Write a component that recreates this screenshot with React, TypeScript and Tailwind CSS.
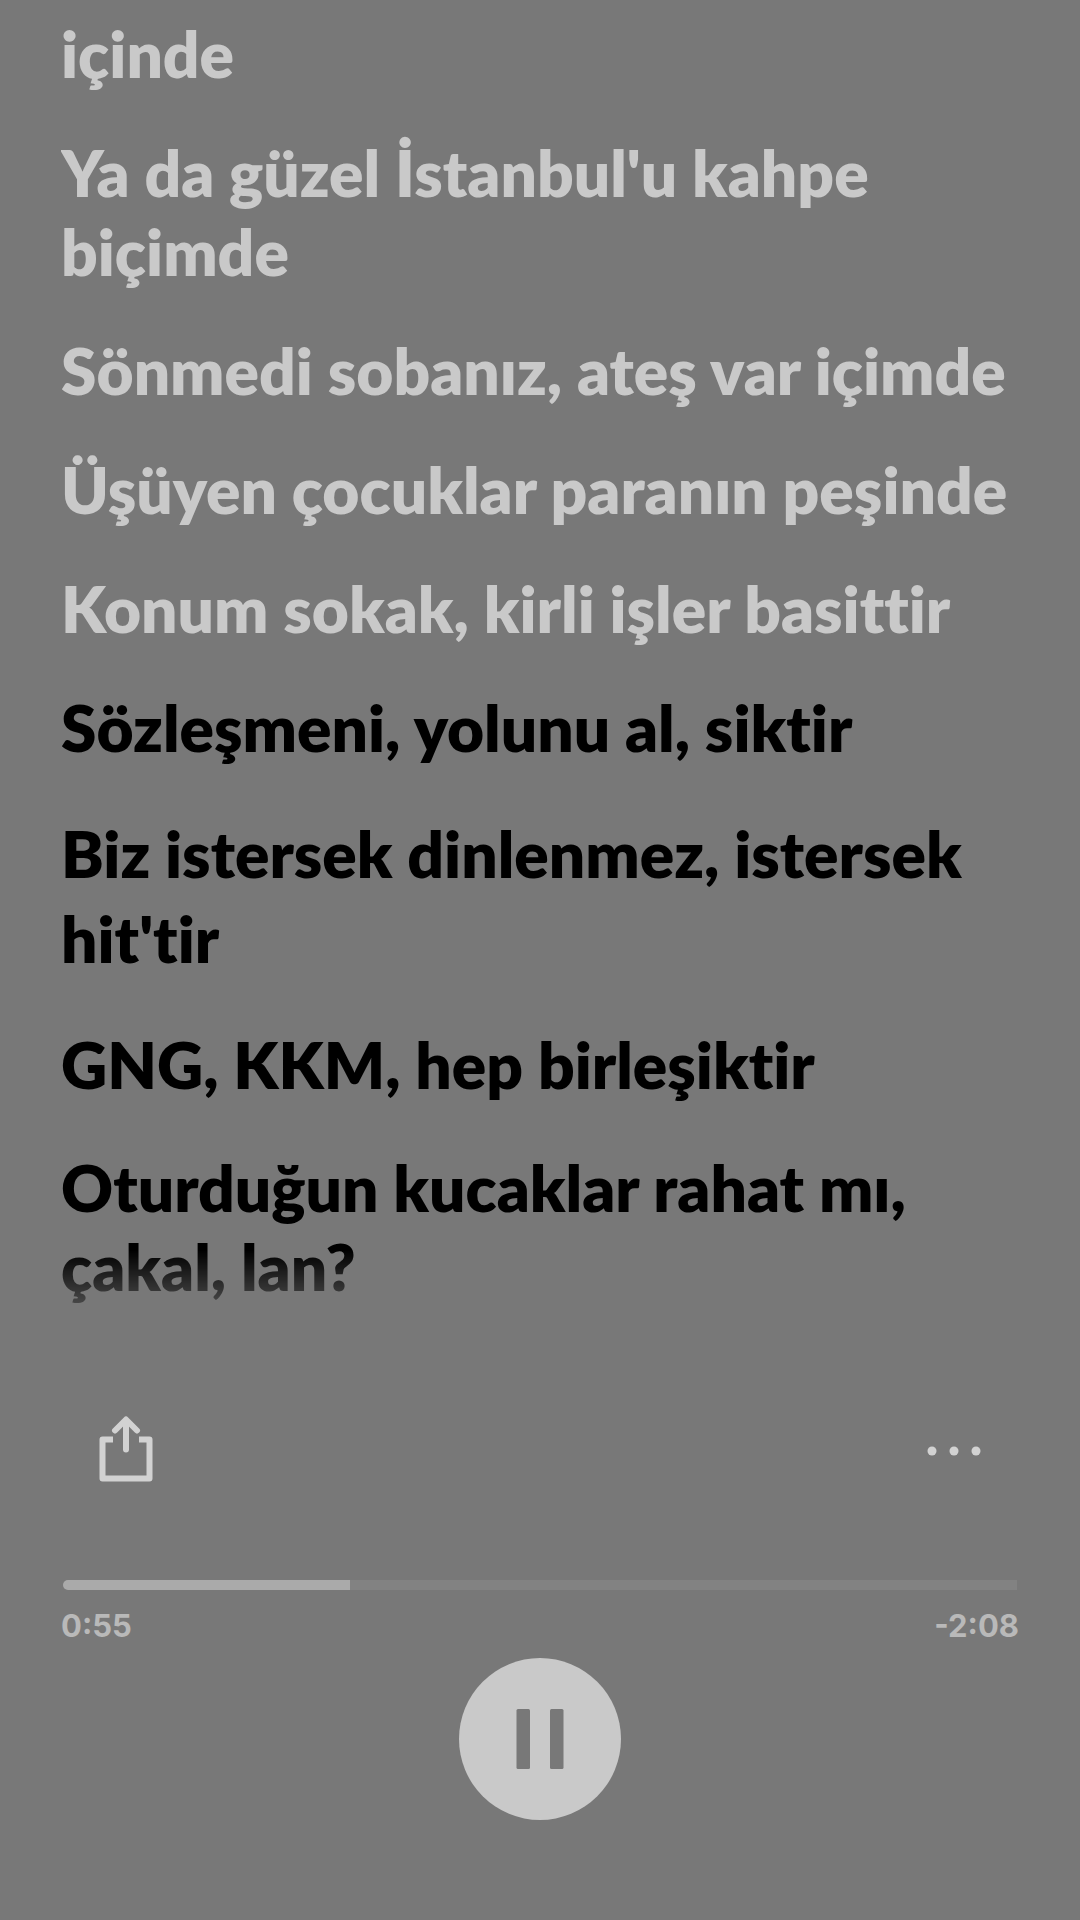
import { useState } from 'react';
import clsx from 'clsx';

const DURATION = 183;

const sungLines = [
  'içinde',
  "Ya da güzel İstanbul'u kahpe biçimde",
  'Sönmedi sobanız, ateş var içimde',
  'Üşüyen çocuklar paranın peşinde',
  'Konum sokak, kirli işler basittir',
];

const nextLines = [
  { text: 'Sözleşmeni, yolunu al, siktir' },
  { text: "Biz istersek dinlenmez, istersek hit'tir", loose: true },
  { text: 'GNG, KKM, hep birleşiktir' },
  { text: 'Oturduğun kucaklar rahat mı, çakal, lan?' },
];

const formatTime = (seconds: number) =>
  `${Math.floor(seconds / 60)}:${String(seconds % 60).padStart(2, '0')}`;

const ShareIcon = () => (
  <svg className="h-[66px] w-[54px]" viewBox="0 0 54 66" fill="none" stroke="currentColor">
    <path d="M14 23.5H3.5V62.5H50.5V23.5H40" strokeWidth="6" strokeLinejoin="round" />
    <path d="M27 33.5V4M16 14.5L27 3.5L38 14.5" strokeWidth="6" strokeLinecap="round" strokeLinejoin="round" />
  </svg>
);

const DotsIcon = () => (
  <svg className="h-4 w-[54px]" viewBox="0 0 54 16" fill="currentColor">
    <circle cx="5" cy="10" r="4.5" />
    <circle cx="27" cy="10" r="4.5" />
    <circle cx="49" cy="10" r="4.5" />
  </svg>
);

const PauseIcon = () => (
  <svg className="h-[62px] w-12" viewBox="0 0 48 62" fill="#787878">
    <rect x="0.5" y="1" width="13.5" height="60" rx="1.5" />
    <rect x="34" y="1" width="13.5" height="60" rx="1.5" />
  </svg>
);

const PlayIcon = () => (
  <svg className="h-[62px] w-12" viewBox="0 0 48 62" fill="#787878">
    <path d="M2 1L47 31L2 61Z" />
  </svg>
);

const LyricsPage = () => {
  const [position, setPosition] = useState(55);
  const [playing, setPlaying] = useState(true);
  const played = (position / DURATION) * 100;

  return (
    <main className="flex min-h-screen flex-col bg-[#787878] px-[61px] font-['Lato',sans-serif]">
      <section className="mask-b-from-[calc(100%-90px)] pt-[14px] pb-[34px] text-[64px] leading-[79px] font-extrabold [font-variant-ligatures:none]">
        <div className="flex flex-col gap-10 text-[#c9c9c9]">
          {sungLines.map((line) => (
            <p key={line}>{line}</p>
          ))}
        </div>
        <div className="mt-10 flex flex-col gap-11 text-black">
          {nextLines.map(({ text, loose }) => (
            <p key={text} className={clsx(loose && 'leading-[85px]')}>
              {text}
            </p>
          ))}
        </div>
      </section>

      <div className="mt-[76px] flex items-center justify-between px-[38px] text-[#d2d2d2]">
        <button type="button" aria-label="Share">
          <ShareIcon />
        </button>
        <button type="button" aria-label="More options">
          <DotsIcon />
        </button>
      </div>

      <div className="mt-[98px] px-[2px]">
        <input
          type="range"
          aria-label="Playback position"
          min={0}
          max={DURATION}
          value={position}
          onChange={(e) => setPosition(Number(e.target.value))}
          className="block h-[10px] w-full appearance-none rounded-l-full rounded-r-xs [&::-webkit-slider-thumb]:h-[10px] [&::-webkit-slider-thumb]:w-px [&::-webkit-slider-thumb]:appearance-none"
          style={{ background: `linear-gradient(to right, #aaaaaa ${played}%, #828282 ${played}%)` }}
        />
      </div>
      <div className="mt-4 flex justify-between font-['Inter',sans-serif] text-[31px] leading-10 font-bold text-[#b9b9b9]">
        <span>{formatTime(position)}</span>
        <span>-{formatTime(DURATION - position)}</span>
      </div>

      <button
        type="button"
        aria-label={playing ? 'Pause' : 'Play'}
        onClick={() => setPlaying(!playing)}
        className="mt-3 mb-[100px] flex size-[162px] items-center justify-center self-center rounded-full bg-[#c9c9c9]"
      >
        {playing ? <PauseIcon /> : <PlayIcon />}
      </button>
    </main>
  );
};

export default LyricsPage;
